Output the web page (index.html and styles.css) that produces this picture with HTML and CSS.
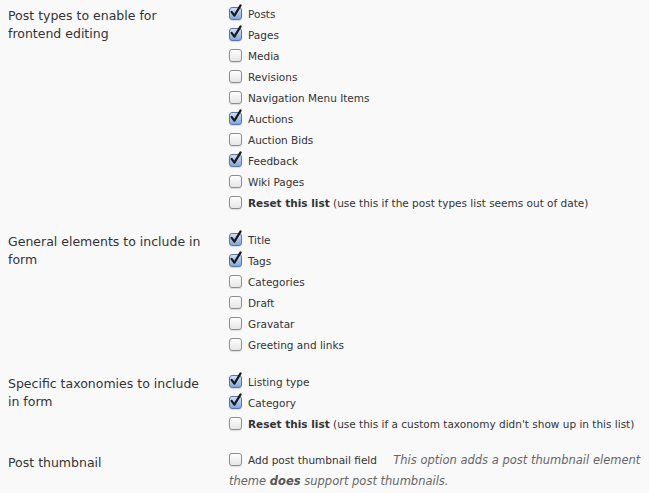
FILE: index.html
```html
<!DOCTYPE html>
<html>
<head>
<meta charset="utf-8">
<link rel="stylesheet" href="styles.css">
</head>
<body>
<div class="page">
  <div class="row">
    <div class="label">Post types to enable for frontend editing</div>
    <div class="opts">
      <div class="opt"><span class="cb on"><svg viewBox="0 0 14 14"><path d="M2.6 6.8 L5.4 10.6 L11.6 0.4" /></svg></span>Posts</div>
      <div class="opt"><span class="cb on"><svg viewBox="0 0 14 14"><path d="M2.6 6.8 L5.4 10.6 L11.6 0.4" /></svg></span>Pages</div>
      <div class="opt"><span class="cb"></span>Media</div>
      <div class="opt"><span class="cb"></span>Revisions</div>
      <div class="opt"><span class="cb"></span>Navigation Menu Items</div>
      <div class="opt"><span class="cb on"><svg viewBox="0 0 14 14"><path d="M2.6 6.8 L5.4 10.6 L11.6 0.4" /></svg></span>Auctions</div>
      <div class="opt"><span class="cb"></span>Auction Bids</div>
      <div class="opt"><span class="cb on"><svg viewBox="0 0 14 14"><path d="M2.6 6.8 L5.4 10.6 L11.6 0.4" /></svg></span>Feedback</div>
      <div class="opt"><span class="cb"></span>Wiki Pages</div>
      <div class="opt"><span class="cb"></span><b>Reset this list</b>&nbsp;(use this if the post types list seems out of date)</div>
    </div>
  </div>
  <div class="row">
    <div class="label">General elements to include in form</div>
    <div class="opts">
      <div class="opt"><span class="cb on"><svg viewBox="0 0 14 14"><path d="M2.6 6.8 L5.4 10.6 L11.6 0.4" /></svg></span>Title</div>
      <div class="opt"><span class="cb on"><svg viewBox="0 0 14 14"><path d="M2.6 6.8 L5.4 10.6 L11.6 0.4" /></svg></span>Tags</div>
      <div class="opt"><span class="cb"></span>Categories</div>
      <div class="opt"><span class="cb"></span>Draft</div>
      <div class="opt"><span class="cb"></span>Gravatar</div>
      <div class="opt"><span class="cb"></span>Greeting and links</div>
    </div>
  </div>
  <div class="row">
    <div class="label">Specific taxonomies to include in form</div>
    <div class="opts">
      <div class="opt"><span class="cb on"><svg viewBox="0 0 14 14"><path d="M2.6 6.8 L5.4 10.6 L11.6 0.4" /></svg></span>Listing type</div>
      <div class="opt"><span class="cb on"><svg viewBox="0 0 14 14"><path d="M2.6 6.8 L5.4 10.6 L11.6 0.4" /></svg></span>Category</div>
      <div class="opt"><span class="cb"></span><b>Reset this list</b>&nbsp;(use this if a custom taxonomy didn't show up in this list)</div>
    </div>
  </div>
  <div class="row">
    <div class="label">Post thumbnail</div>
    <div class="opts wide">
      <div class="para"><span class="cb"></span>Add post thumbnail field <span class="desc">This option adds a post thumbnail element theme <b>does</b> support post thumbnails.</span></div>
    </div>
  </div>
</div>
</body>
</html>
```
FILE: styles.css
```css
html, body {
  margin: 0;
  padding: 0;
  background: #f9f9f9;
  overflow: hidden;
}
body {
  font-family: "DejaVu Sans", "Liberation Sans", sans-serif;
  color: #333;
}
.page {
  padding: 3px 0 0 8px;
}
.row {
  display: grid;
  grid-template-columns: 221px 1fr;
  padding-bottom: 16px;
}
.label {
  font-size: 12.5px;
  line-height: 18px;
  padding-top: 4px;
  width: 205px;
  color: #333;
}
.opts {
  font-size: 10.5px;
}
.opt {
  display: flex;
  align-items: center;
  height: 21px;
  white-space: nowrap;
}
.opt b {
  font-weight: bold;
}
.cb {
  position: relative;
  display: inline-block;
  flex: none;
  box-sizing: border-box;
  width: 13px;
  height: 13px;
  margin-right: 6px;
  border: 1px solid #8e8e8e;
  border-radius: 3px;
  background: linear-gradient(#fdfdfd, #e6e6e6);
  box-shadow: 0 1px 1px rgba(0,0,0,0.12);
  vertical-align: middle;
}
.cb.on {
  border-color: #5a76a6;
  background: linear-gradient(#cfe0f7, #7fa8e0);
}
.cb svg {
  position: absolute;
  left: -1px;
  top: -3px;
  width: 14px;
  height: 14px;
  overflow: visible;
}
.cb svg path {
  fill: none;
  stroke: #1a1a1a;
  stroke-width: 2.2;
  stroke-linecap: round;
  stroke-linejoin: round;
}
.wide {
  width: 418px;
}
.para {
  font-size: 10.5px;
  line-height: 21px;
}
.para .cb {
  top: 2px;
  vertical-align: baseline;
}
.desc {
  font-style: italic;
  font-size: 11.5px;
  color: #666;
  margin-left: 13px;
}
.desc b {
  color: #555;
}
```
